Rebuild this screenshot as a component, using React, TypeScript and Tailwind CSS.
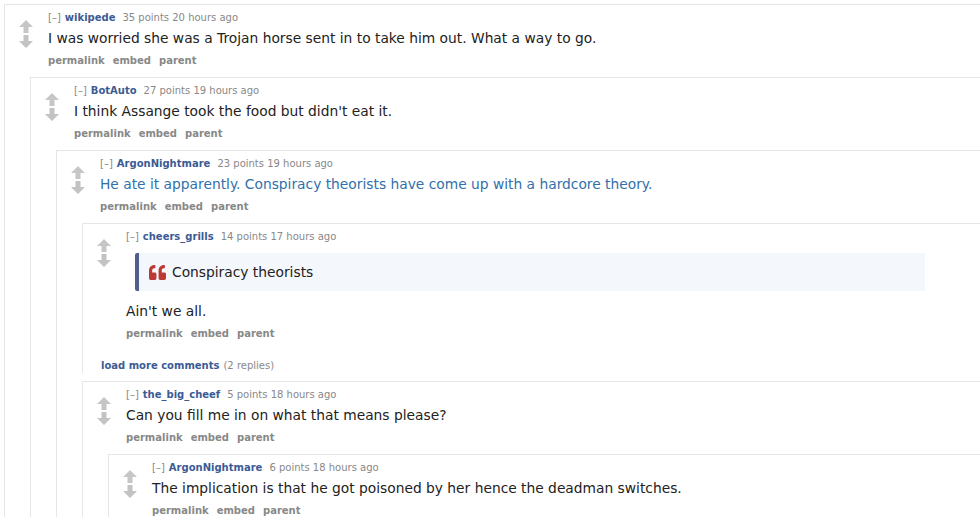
import { FaQuoteLeft } from "react-icons/fa";
import type { ReactNode } from "react";

const FONT = { fontFamily: '"DejaVu Sans", Verdana, sans-serif' };

type Node = {
  user: string;
  points: number;
  age: string;
  body: ReactNode;
  kids?: ReactNode;
};

function Arrows() {
  return (
    <div className="flex w-[14px] shrink-0 flex-col gap-[2px] pt-[15px]">
      <svg width="14" height="13" viewBox="0 0 14 13">
        <polygon points="7,0 14,7 9.5,7 9.5,13 4.5,13 4.5,7 0,7" fill="#c6c6c6" />
      </svg>
      <svg width="14" height="13" viewBox="0 0 14 13">
        <polygon points="4.5,0 9.5,0 9.5,6 14,6 7,13 0,6 4.5,6" fill="#c3c3c3" />
      </svg>
    </div>
  );
}

function Comment({ user, points, age, body, kids }: Node) {
  return (
    <div className="border-l border-t border-[#e6e6e6] bg-white">
      <div className="flex">
        <div className="ml-[14px]">
          <Arrows />
        </div>
        <div className="ml-[15px] min-w-0 flex-1 pt-[7px]">
          <p className="text-[10px] leading-[12px] text-[#888]">
            <span>[–]</span>
            <span className="ml-[4px] font-bold text-[#3b5b94]">{user}</span>
            <span className="ml-[7px]">
              {points} points {age}
            </span>
          </p>
          {body}
          <p className="mt-[7px] flex gap-[8px] text-[10px] font-bold leading-[12px] text-[#888]">
            <span>permalink</span>
            <span>embed</span>
            <span>parent</span>
          </p>
        </div>
      </div>
      {kids && <div className="ml-[25px] mt-[10px]">{kids}</div>}
    </div>
  );
}

function Body({ children, blue }: { children: ReactNode; blue?: boolean }) {
  return (
    <p className={`mt-[4px] text-[13.8px] leading-[20px] ${blue ? "text-[#3170aa]" : "text-[#222]"}`}>
      {children}
    </p>
  );
}

export default function App() {
  return (
    <div className="h-[526px] w-[980px] overflow-hidden bg-white pl-[4px] pt-[4px]" style={FONT}>
      <Comment
        user="wikipede"
        points={35}
        age="20 hours ago"
        body={<Body>I was worried she was a Trojan horse sent in to take him out. What a way to go.</Body>}
        kids={
          <Comment
            user="BotAuto"
            points={27}
            age="19 hours ago"
            body={<Body>I think Assange took the food but didn't eat it.</Body>}
            kids={
              <Comment
                user="ArgonNightmare"
                points={23}
                age="19 hours ago"
                body={
                  <Body blue>
                    He ate it apparently. Conspiracy theorists have come up with a hardcore theory.
                  </Body>
                }
                kids={
                  <>
                    <Comment
                      user="cheers_grills"
                      points={14}
                      age="17 hours ago"
                      body={
                        <div className="mt-[10px]">
                          <div className="ml-[9px] flex h-[38px] w-[790px] items-center rounded-l-[2px] border-l-4 border-[#525f8c] bg-[#f4f7fb] pl-[10px]">
                            <FaQuoteLeft className="text-[#bb3a36]" size={17} />
                            <span className="ml-[6px] text-[13.8px] text-[#222]">Conspiracy theorists</span>
                          </div>
                          <p className="mt-[10px] text-[13.8px] leading-[20px] text-[#222]">Ain't we all.</p>
                        </div>
                      }
                    />
                    <div className="border-l border-[#e6e6e6] pb-[1px] pl-[18px] pt-[20px] text-[10px] leading-[12px]">
                      <span className="font-bold text-[#3b5b94]">load more comments</span>
                      <span className="ml-[4px] text-[#888]">(2 replies)</span>
                    </div>
                    <div className="mt-[8px]">
                      <Comment
                        user="the_big_cheef"
                        points={5}
                        age="18 hours ago"
                        body={<Body>Can you fill me in on what that means please?</Body>}
                        kids={
                          <Comment
                            user="ArgonNightmare"
                            points={6}
                            age="18 hours ago"
                            body={
                              <Body>
                                The implication is that he got poisoned by her hence the deadman switches.
                              </Body>
                            }
                          />
                        }
                      />
                    </div>
                  </>
                }
              />
            }
          />
        }
      />
    </div>
  );
}
